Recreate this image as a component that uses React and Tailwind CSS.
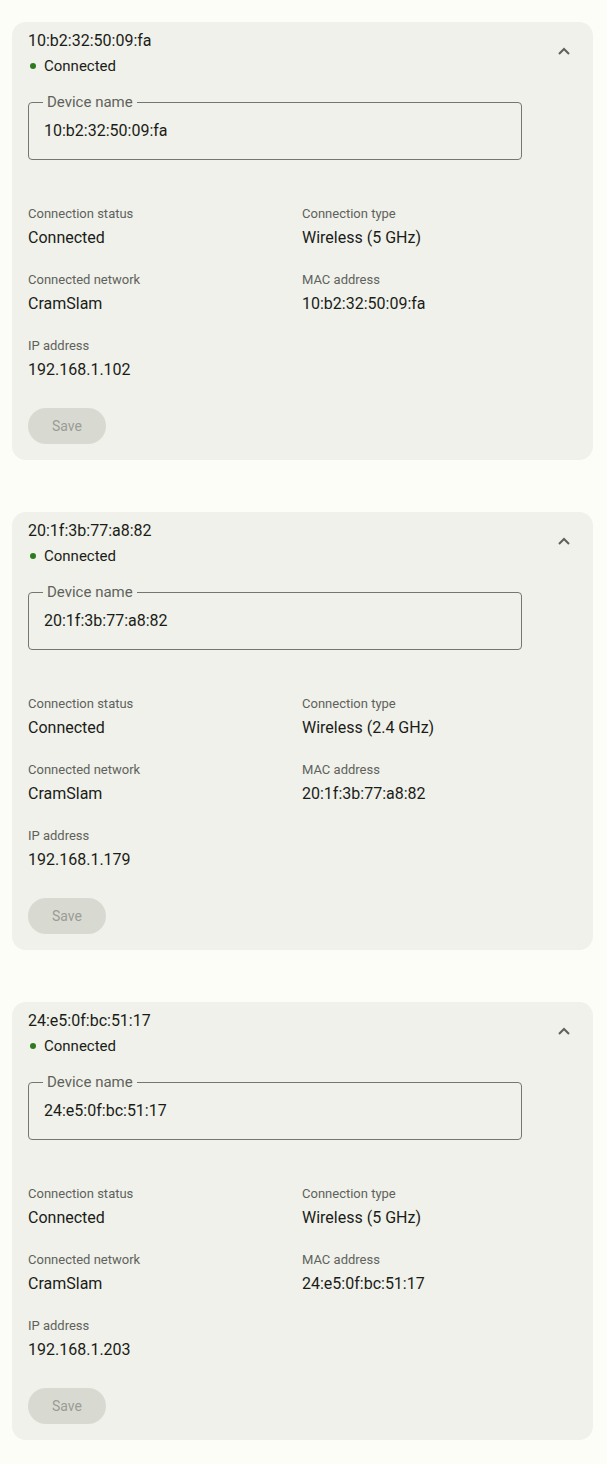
const devices = [
  { mac: "10:b2:32:50:09:fa", type: "Wireless (5 GHz)", ip: "192.168.1.102" },
  { mac: "20:1f:3b:77:a8:82", type: "Wireless (2.4 GHz)", ip: "192.168.1.179" },
  { mac: "24:e5:0f:bc:51:17", type: "Wireless (5 GHz)", ip: "192.168.1.203" },
]

const Field = ({ label, value }) => (
  <div className="h-[66px]">
    <p className="text-[13px] leading-4 text-[#5f625c]">{label}</p>
    <p className="mt-[6px] text-[16px] leading-5 text-[#1b1c18]">{value}</p>
  </div>
)

const DeviceCard = ({ device }) => (
  <div className="rounded-[14px] bg-[#eff1ea] px-4 pt-[9px] pb-4">
    <div className="flex justify-between">
      <div>
        <p className="text-[16px] leading-5 text-[#1b1c18]">{device.mac}</p>
        <div className="mt-[5px] flex items-center">
          <span className="ml-[2px] h-[6px] w-[6px] rounded-full bg-[#2f7a1f]" />
          <span className="ml-[8px] text-[15px] leading-5 text-[#1b1c18]">Connected</span>
        </div>
      </div>
      <svg className="mr-[7px] mt-[16px]" width="12" height="8" viewBox="0 0 12 8">
        <path d="M1 7 L6 2 L11 7" fill="none" stroke="#5f625c" strokeWidth="2" />
      </svg>
    </div>

    <fieldset className="mt-[18px] mr-[55px] h-[66px] rounded-[4px] border border-[#74776f] px-[15px] pb-[6px]">
      <legend className="ml-[-1px] px-[4px] text-[15px] leading-4 text-[#5f625c]">Device name</legend>
      <p className="mt-[11px] text-[16px] leading-5 text-[#1b1c18]">{device.mac}</p>
    </fieldset>

    <div className="mt-[46px] grid grid-cols-[274px_1fr]">
      <Field label="Connection status" value="Connected" />
      <Field label="Connection type" value={device.type} />
      <Field label="Connected network" value="CramSlam" />
      <Field label="MAC address" value={device.mac} />
      <Field label="IP address" value={device.ip} />
    </div>

    <button className="mt-[4px] h-[36px] w-[78px] rounded-full bg-[#d8dad2] text-[14px] text-[#9a9c95]">
      Save
    </button>
  </div>
)

export default function App() {
  return (
    <div className="min-h-screen bg-[#fcfdf6] pl-3 pr-[14px] pt-[22px] font-['Roboto',sans-serif]">
      <div className="flex flex-col gap-[52px]">
        {devices.map((d) => (
          <DeviceCard key={d.mac} device={d} />
        ))}
      </div>
    </div>
  )
}
